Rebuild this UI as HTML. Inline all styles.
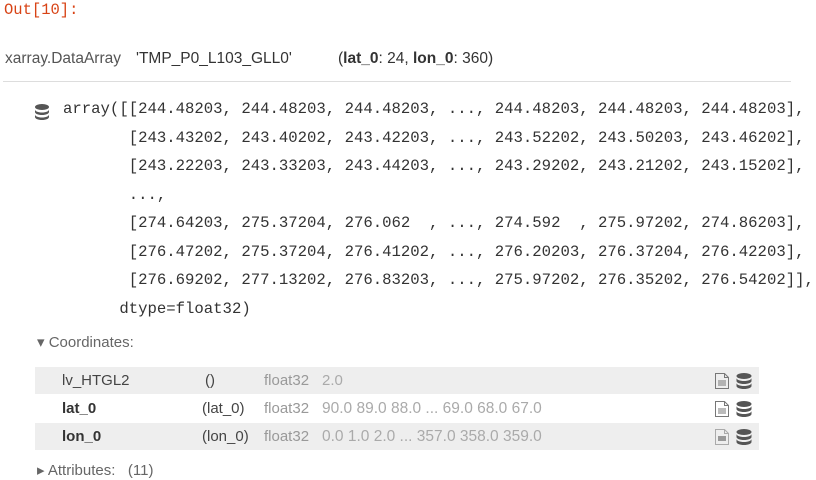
<!DOCTYPE html>
<html><head><meta charset="utf-8"><style>
body{margin:0;width:816px;height:480px;background:#fff;position:relative;overflow:hidden;font-family:"Liberation Sans",sans-serif;}
.abs{position:absolute;white-space:pre;}
.out{left:4px;top:1px;font-family:"Liberation Mono",monospace;font-size:15.5px;color:#d84315;}
.hdr{top:50px;font-size:15.5px;color:#555;}
.mono{font-family:"Liberation Mono",monospace;font-size:15.65px;color:#333;}
.row{position:absolute;left:35px;width:724px;height:27px;}
.row span{position:absolute;top:5px;font-size:15px;color:#444;}
.g{color:#aaa!important}
.lbl{font-size:15px;color:#666;}
</style></head><body>
<div class="abs out">Out[10]:</div>
<div class="abs hdr" style="left:5px">xarray.DataArray</div>
<div class="abs hdr" style="left:136px;color:#333">'TMP_P0_L103_GLL0'</div>
<div class="abs hdr" style="left:338px;color:#333">(<b>lat_0</b>: 24, <b>lon_0</b>: 360)</div>
<div style="position:absolute;left:3px;top:81px;width:788px;height:1px;background:#ddd"></div>
<svg style="position:absolute;left:35px;top:104px" width="14" height="16" viewBox="0 0 14 16"><g fill="#555"><ellipse cx="7" cy="3" rx="7" ry="3"/><path d="M0 5.5c0 1.7 3.1 3 7 3s7-1.3 7-3V8c0 1.7-3.1 3-7 3S0 9.7 0 8z"/><path d="M0 10.5c0 1.7 3.1 3 7 3s7-1.3 7-3V13c0 1.7-3.1 3-7 3S0 14.7 0 13z"/></g></svg>
<div class="abs mono" style="left:63px;top:100px">array([[244.48203, 244.48203, 244.48203, ..., 244.48203, 244.48203, 244.48203],</div>
<div class="abs mono" style="left:63px;top:129px">       [243.43202, 243.40202, 243.42203, ..., 243.52202, 243.50203, 243.46202],</div>
<div class="abs mono" style="left:63px;top:157px">       [243.22203, 243.33203, 243.44203, ..., 243.29202, 243.21202, 243.15202],</div>
<div class="abs mono" style="left:63px;top:186px">       ...,</div>
<div class="abs mono" style="left:63px;top:214px">       [274.64203, 275.37204, 276.062  , ..., 274.592  , 275.97202, 274.86203],</div>
<div class="abs mono" style="left:63px;top:243px">       [276.47202, 275.37204, 276.41202, ..., 276.20203, 276.37204, 276.42203],</div>
<div class="abs mono" style="left:63px;top:271px">       [276.69202, 277.13202, 276.83203, ..., 275.97202, 276.35202, 276.54202]],</div>
<div class="abs mono" style="left:63px;top:300px">      dtype=float32)</div>
<div class="abs lbl" style="left:37px;top:333px">▾ Coordinates:</div>
<div class="row" style="top:367px;background:#eee"><span style="left:27px">lv_HTGL2</span><span style="left:170px">()</span><span style="left:229px;color:#999">float32</span><span class="g" style="left:287px">2.0</span></div>
<div class="row" style="top:395px"><span style="left:27px;font-weight:bold;color:#333">lat_0</span><span style="left:167px">(lat_0)</span><span style="left:229px;color:#999">float32</span><span class="g" style="left:287px;font-size:15.5px">90.0 89.0 88.0 ... 69.0 68.0 67.0</span></div>
<div class="row" style="top:423px;background:#eee"><span style="left:27px;font-weight:bold;color:#333">lon_0</span><span style="left:167px">(lon_0)</span><span style="left:229px;color:#999">float32</span><span class="g" style="left:287px;font-size:15.5px">0.0 1.0 2.0 ... 357.0 358.0 359.0</span></div>
<svg style="position:absolute;left:714px;top:373px" width="40" height="74" viewBox="0 0 40 74">
<g fill="none" stroke="#777" stroke-width="1"><path d="M1.5 0.5h9l4 4v11h-13z"/><path d="M10.5 0.5v4h4"/><path d="M4 8h8M4 10h8M4 12h8"/>
<path d="M1.5 28.5h9l4 4v11h-13z"/><path d="M10.5 28.5v4h4"/><path d="M4 36h8M4 38h8M4 40h8"/>
<path d="M1.5 56.5h9l4 4v11h-13z" stroke="#aaa"/><path d="M10.5 56.5v4h4" stroke="#aaa"/></g>
<rect x="4" y="63" width="8" height="5" fill="#999"/>
<g fill="#555"><g id="d"><ellipse cx="30" cy="3" rx="7.5" ry="3"/><path d="M22.5 5c0 1.7 3.4 3 7.5 3s7.5-1.3 7.5-3v3c0 1.7-3.4 3-7.5 3s-7.5-1.3-7.5-3z"/><path d="M22.5 10c0 1.7 3.4 3 7.5 3s7.5-1.3 7.5-3v3c0 1.7-3.4 3-7.5 3s-7.5-1.3-7.5-3z"/></g>
<use href="#d" y="28"/><use href="#d" y="56"/></g></svg>
<div class="abs lbl" style="left:37px;top:461px">▸ Attributes:   (11)</div>
</body></html>
